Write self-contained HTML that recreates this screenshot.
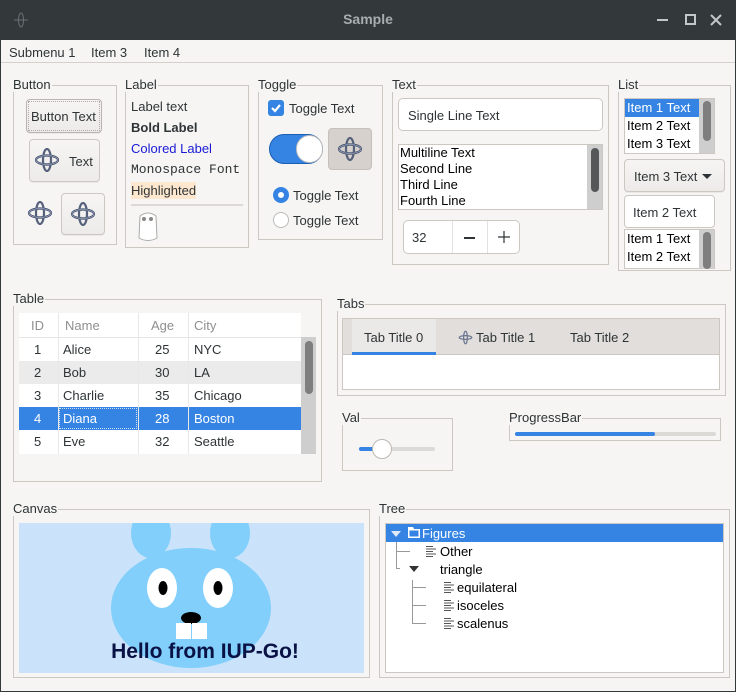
<!DOCTYPE html>
<html><head><meta charset="utf-8"><style>
*{box-sizing:border-box;margin:0;padding:0}
body{width:736px;height:692px;background:#f6f5f4;font-family:"Liberation Sans",sans-serif;font-size:13px;color:#2e3436;position:relative;overflow:hidden}
.a{position:absolute}
.fr{position:absolute;border:1px solid #cdc7c2}
.lg{position:absolute;top:-8px;left:-1px;background:#f6f5f4;padding-right:1px;font-size:13px;line-height:14px;color:#2e3436}
.btn{position:absolute;border:1px solid #cdc7c2;border-radius:4px;background:linear-gradient(#f6f5f4,#edebe9);box-shadow:0 1px 0 rgba(0,0,0,.05)}
.w{background:#fff}
svg{display:block}
.row{position:absolute;left:0;height:23px;line-height:23px;width:282px}
.row span{position:absolute;top:0}
</style></head><body>
<svg width="0" height="0" style="position:absolute"><defs>
<g id="ic"><ellipse cx="12" cy="12" rx="11" ry="4.5" fill="none" stroke="#3d4a63" stroke-width="2.2"/><ellipse cx="12" cy="12" rx="4" ry="11" fill="none" stroke="#55617a" stroke-width="2.2"/><ellipse cx="12" cy="12" rx="11" ry="4.5" fill="none" stroke="#9aa6c4" stroke-width="0.8"/></g>
</defs></svg>
<!-- title bar -->
<div class="a" style="left:0;top:0;width:736px;height:40px;background:#33393b"></div>
<svg class="a" style="left:13px;top:12px" width="16" height="16"><ellipse cx="8" cy="8" rx="2.5" ry="7" fill="none" stroke="#6a7075"/><line x1="1" y1="8" x2="15" y2="8" stroke="#6a7075"/></svg>
<div class="a" style="left:0;top:11px;width:736px;text-align:center;color:#a8adb0;font-weight:bold;font-size:14px">Sample</div>
<div class="a" style="left:657px;top:19px;width:11px;height:2px;background:#c4c7c9"></div>
<div class="a" style="left:685px;top:14px;width:11px;height:11px;border:2px solid #c4c7c9"></div>
<svg class="a" style="left:710px;top:14px" width="12" height="12"><path d="M1 1L11 11M11 1L1 11" stroke="#c4c7c9" stroke-width="2"/></svg>
<div class="a" style="left:0;top:40px;width:1px;height:652px;background:#33393b"></div>
<div class="a" style="left:735px;top:40px;width:1px;height:652px;background:#33393b"></div>
<div class="a" style="left:0;top:691px;width:736px;height:1px;background:#33393b"></div>
<!-- menu -->
<div class="a" style="left:1px;top:40px;width:734px;height:23px;border-bottom:1px solid #d5d0cc"></div>
<div class="a" style="left:9px;top:45px">Submenu 1</div>
<div class="a" style="left:91px;top:45px">Item 3</div>
<div class="a" style="left:144px;top:45px">Item 4</div>

<!-- Button -->
<div class="fr" style="left:13px;top:85px;width:104px;height:160px"><span class="lg">Button</span></div>
<div class="btn" style="left:26px;top:99px;width:76px;height:34px;border-color:#b9b4ae"><div class="a" style="left:1px;top:1px;right:1px;bottom:1px;border:1px dotted #aaa"></div><div class="a" style="left:4px;top:9px">Button Text</div></div>
<div class="btn" style="left:29px;top:139px;width:71px;height:43px"><svg class="a" style="left:5px;top:8px" width="24" height="24"><use href="#ic"/></svg><div class="a" style="left:39px;top:14px">Text</div></div>
<svg class="a" style="left:24px;top:201px" width="32" height="24" viewBox="0 0 24 24"><use href="#ic"/></svg>
<div class="btn" style="left:61px;top:193px;width:44px;height:42px"><svg class="a" style="left:5px;top:8px" width="32" height="24" viewBox="0 0 24 24"><use href="#ic"/></svg></div>

<!-- Label -->
<div class="fr" style="left:125px;top:85px;width:124px;height:163px"><span class="lg">Label</span></div>
<div class="a" style="left:131px;top:99px">Label text</div>
<div class="a" style="left:131px;top:120px;font-weight:bold">Bold Label</div>
<div class="a" style="left:131px;top:141px;color:#1a1ad6">Colored Label</div>
<div class="a" style="left:131px;top:162px;font-family:'Liberation Mono',monospace">Monospace Font</div>
<div class="a" style="left:131px;top:182px;background:#fde8cf;padding:1px 0">Highlighted</div>
<div class="a" style="left:131px;top:204px;width:112px;height:2px;background:#dcd8d4"></div>
<svg class="a" style="left:134px;top:210px" width="28" height="34"><path d="M6 6 Q14 0 22 6 L23 28 Q14 33 5 28 Z" fill="#fff" stroke="#aaa"/><circle cx="10" cy="9" r="2" fill="#888"/><circle cx="17" cy="9" r="2" fill="#888"/></svg>

<!-- Toggle -->
<div class="fr" style="left:258px;top:85px;width:125px;height:155px"><span class="lg">Toggle</span></div>
<div class="a" style="left:268px;top:100px;width:16px;height:16px;border-radius:3px;background:#3584e4"></div>
<svg class="a" style="left:268px;top:100px" width="16" height="16"><path d="M4 8 L7 11 L12 5" fill="none" stroke="#fff" stroke-width="2.2"/></svg>
<div class="a" style="left:289px;top:101px">Toggle Text</div>
<div class="a" style="left:269px;top:134px;width:54px;height:30px;border-radius:15px;background:#3584e4;border:1px solid #1c5fb0"></div>
<div class="a" style="left:296px;top:135px;width:27px;height:28px;border-radius:14px;background:#fff;border:1px solid #bbb"></div>
<div class="a" style="left:328px;top:128px;width:44px;height:42px;border-radius:4px;background:#d6d1cd;border:1px solid #c5c0bb"><svg class="a" style="left:5px;top:8px" width="32" height="24" viewBox="0 0 24 24"><use href="#ic"/></svg></div>
<div class="a" style="left:273px;top:187px;width:16px;height:16px;border-radius:50%;border:5px solid #3584e4;background:#fff"></div>
<div class="a" style="left:293px;top:188px">Toggle Text</div>
<div class="a" style="left:273px;top:212px;width:16px;height:16px;border-radius:50%;border:1px solid #bbb;background:#fff"></div>
<div class="a" style="left:293px;top:213px">Toggle Text</div>

<!-- Text -->
<div class="fr" style="left:392px;top:85px;width:217px;height:180px"><span class="lg">Text</span></div>
<div class="a w" style="left:398px;top:98px;width:205px;height:33px;border:1px solid #cdc7c2;border-radius:5px"><div class="a" style="left:9px;top:9px">Single Line Text</div></div>
<div class="a w" style="left:398px;top:144px;width:205px;height:66px;border:1px solid #cdc7c2;line-height:16px;padding-left:1px;color:#000">Multiline Text<br>Second Line<br>Third Line<br>Fourth Line</div>
<div class="a" style="left:587px;top:145px;width:15px;height:64px;background:#cecece"></div>
<div class="a" style="left:591px;top:148px;width:8px;height:44px;border-radius:4px;background:#545859"></div>
<div class="a w" style="left:403px;top:220px;width:117px;height:34px;border:1px solid #cdc7c2;border-radius:5px"><div class="a" style="left:8px;top:9px">32</div><div class="a" style="left:48px;top:0;width:1px;height:32px;background:#e3e0dd"></div><div class="a" style="left:83px;top:0;width:1px;height:32px;background:#e3e0dd"></div><div class="a" style="left:60px;top:16px;width:11px;height:2px;background:#2e3436"></div><svg class="a" style="left:94px;top:10px" width="12" height="12"><path d="M6 0V12M0 6H12" stroke="#2e3436" stroke-width="1.2"/></svg></div>

<!-- List -->
<div class="fr" style="left:618px;top:85px;width:113px;height:186px"><span class="lg">List</span></div>
<div class="a w" style="left:624px;top:98px;width:91px;height:56px;border:1px solid #cdc7c2;line-height:18px;color:#000"><div style="background:#3584e4;color:#fff;width:74px;padding-left:2px">Item 1 Text</div><div style="padding-left:2px">Item 2 Text</div><div style="padding-left:2px">Item 3 Text</div></div>
<div class="a" style="left:699px;top:99px;width:15px;height:54px;background:#cecece"></div>
<div class="a" style="left:703px;top:101px;width:8px;height:40px;border-radius:4px;background:#7e7e7e"></div>
<div class="btn" style="left:624px;top:159px;width:101px;height:33px"><div class="a" style="left:9px;top:9px">Item 3 Text</div><div class="a" style="left:77px;top:14px;border-left:5px solid transparent;border-right:5px solid transparent;border-top:5px solid #2e3436"></div></div>
<div class="a w" style="left:624px;top:195px;width:91px;height:33px;border:1px solid #cdc7c2;border-radius:4px"><div class="a" style="left:8px;top:9px">Item 2 Text</div></div>
<div class="a w" style="left:624px;top:229px;width:91px;height:40px;border:1px solid #cdc7c2;line-height:18px;color:#000;padding-left:2px">Item 1 Text<br>Item 2 Text</div>
<div class="a" style="left:699px;top:230px;width:15px;height:39px;background:#cecece"></div>
<div class="a" style="left:703px;top:232px;width:8px;height:37px;border-radius:4px;background:#7e7e7e"></div>

<!-- Table -->
<div class="fr" style="left:13px;top:299px;width:309px;height:183px"><span class="lg">Table</span></div>
<div class="a w" style="left:19px;top:313px;width:282px;height:141px;overflow:hidden">
 <div class="row" style="top:0;height:25px;line-height:25px;color:#8f8f8f;border-bottom:1px solid #e5e5e5"><span style="left:12px">ID</span><span style="left:46px">Name</span><span style="left:132px">Age</span><span style="left:175px">City</span></div>
 <div class="row" style="top:25px"><span style="left:15px">1</span><span style="left:44px">Alice</span><span style="left:136px">25</span><span style="left:175px">NYC</span></div>
 <div class="row" style="top:48px;background:#ebebeb"><span style="left:15px">2</span><span style="left:44px">Bob</span><span style="left:136px">30</span><span style="left:175px">LA</span></div>
 <div class="row" style="top:71px"><span style="left:15px">3</span><span style="left:44px">Charlie</span><span style="left:136px">35</span><span style="left:175px">Chicago</span></div>
 <div class="row" style="top:94px;background:#3584e4;color:#fff"><span style="left:15px">4</span><span style="left:44px">Diana</span><span style="left:136px">28</span><span style="left:175px">Boston</span><div class="a" style="left:40px;top:1px;width:78px;height:21px;border:1px dotted #cfe0f5"></div></div>
 <div class="row" style="top:117px"><span style="left:15px">5</span><span style="left:44px">Eve</span><span style="left:136px">32</span><span style="left:175px">Seattle</span></div>
 <div class="a" style="left:39px;top:0;width:1px;height:141px;background:#e8e8e8"></div>
 <div class="a" style="left:119px;top:0;width:1px;height:141px;background:#e8e8e8"></div>
 <div class="a" style="left:169px;top:0;width:1px;height:141px;background:#e8e8e8"></div>
</div>
<div class="a" style="left:301px;top:337px;width:15px;height:117px;background:#cecece"></div>
<div class="a" style="left:305px;top:341px;width:8px;height:53px;border-radius:4px;background:#7e7e7e"></div>

<!-- Tabs -->
<div class="fr" style="left:337px;top:304px;width:389px;height:92px"><span class="lg">Tabs</span></div>
<div class="a" style="left:342px;top:318px;width:378px;height:72px;border:1px solid #cdc7c2;background:#fff"></div>
<div class="a" style="left:343px;top:319px;width:376px;height:36px;background:#e1dedb;border-bottom:1px solid #cdc7c2"></div>
<div class="a" style="left:352px;top:319px;width:84px;height:36px;background:#ebe9e7;border-bottom:3px solid #3584e4"></div>
<div class="a" style="left:364px;top:330px">Tab Title 0</div>
<svg class="a" style="left:457px;top:330px" width="17" height="15" viewBox="0 0 24 24"><ellipse cx="12" cy="12" rx="10" ry="3" fill="none" stroke="#6a7590" stroke-width="2"/><ellipse cx="12" cy="12" rx="3" ry="10" fill="none" stroke="#6a7590" stroke-width="2"/></svg>
<div class="a" style="left:476px;top:330px">Tab Title 1</div>
<div class="a" style="left:570px;top:330px">Tab Title 2</div>

<!-- Val -->
<div class="fr" style="left:342px;top:418px;width:111px;height:53px"><span class="lg">Val</span></div>
<div class="a" style="left:359px;top:447px;width:76px;height:4px;border-radius:2px;background:#dcdad7"></div>
<div class="a" style="left:359px;top:447px;width:16px;height:4px;border-radius:2px;background:#3584e4"></div>
<div class="a" style="left:372px;top:439px;width:20px;height:20px;border-radius:50%;background:#fff;border:1px solid #bdb8b3"></div>

<!-- Progress -->
<div class="fr" style="left:509px;top:418px;width:212px;height:23px"><span class="lg">ProgressBar</span></div>
<div class="a" style="left:515px;top:432px;width:201px;height:4px;border-radius:2px;background:#dcdad7"></div>
<div class="a" style="left:515px;top:432px;width:140px;height:4px;border-radius:2px;background:#3584e4"></div>

<!-- Canvas -->
<div class="fr" style="left:13px;top:509px;width:357px;height:169px"><span class="lg">Canvas</span></div>
<div class="a" style="left:19px;top:523px;width:345px;height:150px;background:#cae3fa;overflow:hidden">
<svg width="345" height="150">
<ellipse cx="132" cy="10" rx="20" ry="25" fill="#81cffa"/><ellipse cx="211" cy="10" rx="20" ry="25" fill="#81cffa"/>
<ellipse cx="172" cy="85" rx="80" ry="60" fill="#81cffa"/>
<ellipse cx="143" cy="65" rx="15" ry="20" fill="#fff"/><ellipse cx="199" cy="65" rx="15" ry="20" fill="#fff"/>
<ellipse cx="144" cy="65" rx="4.5" ry="7" fill="#000"/><ellipse cx="199" cy="65" rx="4.5" ry="7" fill="#000"/>
<ellipse cx="172" cy="95" rx="10" ry="6" fill="#000"/>
<rect x="157" y="100" width="15" height="16" fill="#fff"/><rect x="173" y="100" width="15" height="16" fill="#fff"/>
<text x="186" y="135" text-anchor="middle" font-family="Liberation Sans" font-weight="bold" font-size="21" fill="#0a1245">Hello from IUP-Go!</text>
</svg></div>

<!-- Tree -->
<div class="fr" style="left:379px;top:509px;width:351px;height:169px"><span class="lg">Tree</span></div>
<div class="a w" style="left:385px;top:523px;width:339px;height:150px;border:1px solid #cdc7c2"></div>
<div class="a" style="left:386px;top:524px;width:337px;height:18px;background:#3584e4"></div>
<div class="a" style="left:391px;top:531px;border-left:5px solid transparent;border-right:5px solid transparent;border-top:6px solid #dfe9f8"></div>
<svg class="a" style="left:407px;top:526px" width="14" height="13"><path d="M1 1H6L7 3H13V12H1Z" fill="#fff"/><path d="M2.5 4.5H11.5V10.5H2.5Z" fill="#3584e4"/></svg>
<div class="a" style="left:422px;top:526px;color:#fff">Figures</div>
<div class="a" style="left:396px;top:542px;width:1px;height:26px;background:#999"></div>
<div class="a" style="left:396px;top:551px;width:14px;height:1px;background:#999"></div>
<div class="a" style="left:396px;top:568px;width:4px;height:1px;background:#999"></div>
<svg class="a" style="left:425px;top:545px" width="12" height="13"><path d="M1 1.5h7M1 4h10M1 6.5h7M1 9h10M1 11.5h7" stroke="#555"/></svg>
<div class="a" style="left:440px;top:544px;color:#000">Other</div>
<div class="a" style="left:409px;top:566px;border-left:5px solid transparent;border-right:5px solid transparent;border-top:6px solid #333"></div>
<div class="a" style="left:440px;top:562px;color:#000">triangle</div>
<div class="a" style="left:412px;top:580px;width:1px;height:44px;background:#999"></div>
<div class="a" style="left:412px;top:587px;width:14px;height:1px;background:#999"></div>
<div class="a" style="left:412px;top:605px;width:14px;height:1px;background:#999"></div>
<div class="a" style="left:412px;top:623px;width:14px;height:1px;background:#999"></div>
<svg class="a" style="left:443px;top:581px" width="12" height="13"><path d="M1 1.5h7M1 4h10M1 6.5h7M1 9h10M1 11.5h7" stroke="#555"/></svg>
<svg class="a" style="left:443px;top:599px" width="12" height="13"><path d="M1 1.5h7M1 4h10M1 6.5h7M1 9h10M1 11.5h7" stroke="#555"/></svg>
<svg class="a" style="left:443px;top:617px" width="12" height="13"><path d="M1 1.5h7M1 4h10M1 6.5h7M1 9h10M1 11.5h7" stroke="#555"/></svg>
<div class="a" style="left:457px;top:580px;color:#000">equilateral</div>
<div class="a" style="left:457px;top:598px;color:#000">isoceles</div>
<div class="a" style="left:457px;top:616px;color:#000">scalenus</div>
</body></html>
